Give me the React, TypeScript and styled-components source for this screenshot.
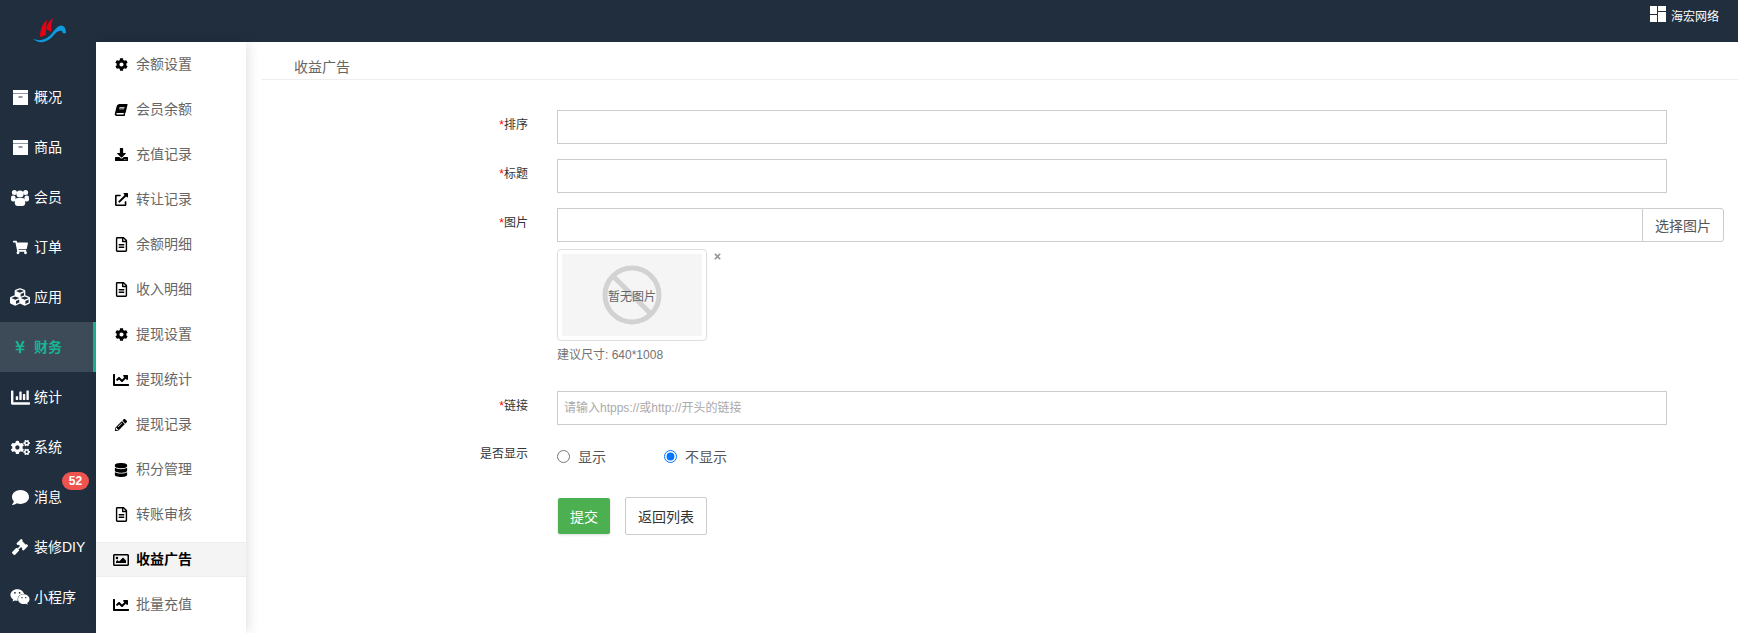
import React from "react";
import styled, { createGlobalStyle } from "styled-components";
import {
  FaBook,
  FaChartBar,
  FaChartLine,
  FaCog,
  FaCogs,
  FaComment,
  FaCubes,
  FaDatabase,
  FaDownload,
  FaExternalLinkAlt,
  FaGavel,
  FaPencilAlt,
  FaRegFileAlt,
  FaRegImage,
  FaShoppingCart,
  FaTimes,
  FaWeixin,
  FaYenSign,
} from "react-icons/fa";

const GlobalStyle = createGlobalStyle`
  html, body {
    margin: 0;
    padding: 0;
    height: 100%;
    background: #fff;
    overflow: hidden;
  }
  body, input, button {
    font-family: "Liberation Sans", "Noto Sans CJK SC", sans-serif;
  }
  * {
    box-sizing: border-box;
  }
`;

// FA4 style archive box, the package only has the FA5 one
const ArchiveIcon = () => (
  <svg width="15" height="15" viewBox="0 0 15 15">
    <rect x="0" y="0" width="15" height="3.500" fill="#fff" />
    <path d="M0 4h15v11H0z M5.500 6.500v1h4v-1z" fill="#fff" fillRule="evenodd" />
  </svg>
);

const UsersIcon = () => (
  <svg width="18" height="17" viewBox="0 0 18 17">
    <circle cx="9" cy="5" r="3.600" fill="#fff" />
    <circle cx="3.400" cy="3.400" r="2.500" fill="#fff" />
    <circle cx="14.600" cy="3.400" r="2.500" fill="#fff" />
    <rect x="3.800" y="9" width="10.400" height="8" rx="3" fill="#fff" />
    <rect x="0" y="6.500" width="4.500" height="6" rx="2" fill="#fff" />
    <rect x="13.500" y="6.500" width="4.500" height="6" rx="2" fill="#fff" />
  </svg>
);

const mainMenu = [
  { label: "概况", icon: <ArchiveIcon /> },
  { label: "商品", icon: <ArchiveIcon /> },
  { label: "会员", icon: <UsersIcon /> },
  { label: "订单", icon: <FaShoppingCart size={15} /> },
  { label: "应用", icon: <FaCubes size={20} /> },
  { label: "财务", icon: <FaYenSign size={14} />, active: true },
  { label: "统计", icon: <FaChartBar size={19} /> },
  { label: "系统", icon: <FaCogs size={19} /> },
  { label: "消息", icon: <FaComment size={17} />, badge: 52 },
  { label: "装修DIY", icon: <FaGavel size={16} /> },
  { label: "小程序", icon: <FaWeixin size={20} /> },
];

const subMenu = [
  { label: "余额设置", icon: <FaCog size={13} /> },
  { label: "会员余额", icon: <SkewedBook /> },
  { label: "充值记录", icon: <FaDownload size={13} /> },
  { label: "转让记录", icon: <FaExternalLinkAlt size={13} /> },
  { label: "余额明细", icon: <FaRegFileAlt size={15} /> },
  { label: "收入明细", icon: <FaRegFileAlt size={15} /> },
  { label: "提现设置", icon: <FaCog size={13} /> },
  { label: "提现统计", icon: <FaChartLine size={16} /> },
  { label: "提现记录", icon: <FaPencilAlt size={12} /> },
  { label: "积分管理", icon: <FaDatabase size={14} /> },
  { label: "转账审核", icon: <FaRegFileAlt size={15} /> },
  { label: "收益广告", icon: <FaRegImage size={16} />, active: true },
  { label: "批量充值", icon: <FaChartLine size={16} /> },
];

function SkewedBook() {
  return <FaBook size={12} style={{ transform: "skewX(-14deg)" }} />;
}

const Logo = () => (
  <svg width="36" height="28" viewBox="0 0 36 28">
    <path d="M9 22 C9 14 12 8 16 5 C15 10 15 17 15 20 Z" fill="#e60012" />
    <path d="M15 14 C16 9 19 5 22 3 C20 9 20 13 20 17 Z" fill="#e60012" />
    <path
      d="M2 24 C10 27 17 24 22 17 C25 13 29 9 32 11 C34 12 35 15 35 18 C33 19 31 18 31 16 C27 15 25 18 22 21 C16 28 8 29 2 24 Z"
      fill="#0f9ae0"
    />
  </svg>
);

const App = () => {
  return (
    <Shell>
      <GlobalStyle />
      <Sidebar>
        <LogoBox>
          <Logo />
        </LogoBox>
        {mainMenu.map((item) => (
          <MainItem key={item.label} $active={item.active}>
            <MainIcon>{item.icon}</MainIcon>
            <MainText>{item.label}</MainText>
            {item.badge && <Badge>{item.badge}</Badge>}
          </MainItem>
        ))}
      </Sidebar>
      <RightColumn>
        <TopBar>
          <CompanyIcon width="16" height="16" viewBox="0 0 16 16">
            <rect x="0" y="0" width="7" height="8" fill="#fff" />
            <rect x="8" y="0" width="8" height="5" fill="#fff" />
            <rect x="0" y="9" width="7" height="7" fill="#fff" />
            <rect x="8" y="6" width="8" height="10" fill="#fff" />
          </CompanyIcon>
          <CompanyName>海宏网络</CompanyName>
        </TopBar>
        <Body>
          <SubMenu>
            {subMenu.map((item) => (
              <SubItem key={item.label} $active={item.active}>
                <SubIcon>{item.icon}</SubIcon>
                <SubText>{item.label}</SubText>
              </SubItem>
            ))}
          </SubMenu>
          <Main>
            <PageHeader>收益广告</PageHeader>
            <Form>
              <Row>
                <Label>
                  <Star>*</Star>排序
                </Label>
                <TextInput />
              </Row>
              <Row>
                <Label>
                  <Star>*</Star>标题
                </Label>
                <TextInput />
              </Row>
              <ImageRow>
                <Label>
                  <Star>*</Star>图片
                </Label>
                <div>
                  <InputGroup>
                    <GroupInput />
                    <GroupButton>选择图片</GroupButton>
                  </InputGroup>
                  <Thumb>
                    <ThumbInner>
                      <NoImage width="64" height="64" viewBox="0 0 64 64">
                        <circle cx="32" cy="32" r="27" fill="none" stroke="#d2d2d2" strokeWidth="5" />
                        <line x1="13" y1="13" x2="51" y2="51" stroke="#d2d2d2" strokeWidth="5" />
                      </NoImage>
                      <NoImageText>暂无图片</NoImageText>
                    </ThumbInner>
                    <RemoveIcon>
                      <FaTimes />
                    </RemoveIcon>
                  </Thumb>
                  <Hint>建议尺寸: 640*1008</Hint>
                </div>
              </ImageRow>
              <Row>
                <Label>
                  <Star>*</Star>链接
                </Label>
                <TextInput placeholder="请输入htpps://或http://开头的链接" />
              </Row>
              <RadioRow>
                <Label>是否显示</Label>
                <RadioGroup>
                  <RadioLabel>
                    <input type="radio" name="show" />
                    显示
                  </RadioLabel>
                  <RadioLabel>
                    <input type="radio" name="show" defaultChecked />
                    不显示
                  </RadioLabel>
                </RadioGroup>
              </RadioRow>
              <ButtonRow>
                <SubmitButton>提交</SubmitButton>
                <BackButton>返回列表</BackButton>
              </ButtonRow>
            </Form>
          </Main>
        </Body>
      </RightColumn>
    </Shell>
  );
};

export default App;

const Shell = styled.div`
  display: flex;
  height: 633px;
  overflow: hidden;
`;
const Sidebar = styled.div`
  width: 96px;
  flex-shrink: 0;
  background: #202e3e;
`;
const LogoBox = styled.div`
  height: 72px;
  padding: 15px 0 0 31px;
  display: flex;
  align-items: flex-start;
`;
const MainItem = styled.div<{ $active?: boolean }>`
  position: relative;
  height: 50px;
  display: flex;
  align-items: center;
  font-size: 14px;
  color: ${({ $active }) => ($active ? "#1ab394" : "#fff")};
  font-weight: ${({ $active }) => ($active ? 700 : 400)};
  background: ${({ $active }) => ($active ? "#3d4a58" : "transparent")};
  border-right: ${({ $active }) => ($active ? "3px solid #1ab394" : "0")};
`;
const MainIcon = styled.span`
  width: 34px;
  padding-left: 6px;
  flex-shrink: 0;
  display: flex;
  justify-content: center;
`;
const MainText = styled.span`
  padding-bottom: 2px;
`;
const Badge = styled.span`
  position: absolute;
  top: 0;
  left: 62px;
  width: 27px;
  height: 18px;
  border-radius: 9px;
  background: #ef5350;
  color: #fff;
  font-size: 12px;
  font-weight: 700;
  line-height: 18px;
  text-align: center;
`;
const RightColumn = styled.div`
  flex: 1;
  min-width: 0;
  display: flex;
  flex-direction: column;
`;
const TopBar = styled.div`
  height: 42px;
  flex-shrink: 0;
  background: #202e3e;
  display: flex;
  align-items: flex-start;
  padding: 6px 19px 0 0;
  justify-content: flex-end;
`;
const CompanyIcon = styled.svg`
  margin-right: 5px;
`;
const CompanyName = styled.span`
  color: #fff;
  font-size: 12px;
  line-height: 22px;
`;
const Body = styled.div`
  flex: 1;
  display: flex;
  min-height: 0;
`;
const SubMenu = styled.div`
  width: 150px;
  flex-shrink: 0;
  padding-top: 5px;
  background: #fff;
  box-shadow: 2px 0 12px rgba(0, 0, 0, 0.12);
  position: relative;
  z-index: 1;
`;
const SubItem = styled.div<{ $active?: boolean }>`
  height: 35px;
  margin-bottom: 10px;
  display: flex;
  align-items: center;
  font-size: 14px;
  color: ${({ $active }) => ($active ? "#000" : "#666")};
  font-weight: ${({ $active }) => ($active ? 700 : 400)};
  background: ${({ $active }) => ($active ? "#f4f4f4" : "transparent")};
  border-top: ${({ $active }) => ($active ? "1px solid #eee" : "0")};
  border-bottom: ${({ $active }) => ($active ? "1px solid #eee" : "0")};
`;
const SubIcon = styled.span`
  width: 40px;
  padding-left: 10px;
  flex-shrink: 0;
  display: flex;
  justify-content: center;
  color: #000;
`;
const SubText = styled.span`
  padding-bottom: 3px;
`;
const Main = styled.div`
  flex: 1;
  min-width: 0;
  padding-left: 15px;
`;
const PageHeader = styled.div`
  height: 38px;
  padding: 16px 0 0 33px;
  line-height: 19px;
  font-size: 14px;
  color: #666;
  border-bottom: 1px solid #eee;
`;
const Form = styled.div`
  padding-top: 30px;
  display: flex;
  flex-direction: column;
  gap: 15px;
`;
const Row = styled.div`
  display: grid;
  grid-template-columns: 267px 1110px;
  column-gap: 29px;
  align-items: start;
`;
const ImageRow = styled(Row)`
  grid-template-columns: 267px 1167px;
  margin-bottom: 12px;
`;
const RadioRow = styled(Row)`
  margin-top: -1px;
  height: 34px;
`;
const ButtonRow = styled.div`
  margin: 9px 0 0 296px;
  display: flex;
  align-items: center;
  gap: 15px;
`;
const Label = styled.label`
  font-size: 12px;
  line-height: 18px;
  color: #333;
  text-align: right;
  padding-top: 6px;
`;
const Star = styled.span`
  color: #f00;
`;
const TextInput = styled.input`
  width: 100%;
  height: 34px;
  border: 1px solid #ccc;
  background: #fff;
  padding: 0 6px;
  font-size: 12px;
  outline: 0;
  &::placeholder {
    color: #aaa;
  }
`;
const InputGroup = styled.div`
  display: flex;
  height: 34px;
`;
const GroupInput = styled(TextInput)`
  flex: 1;
  width: auto;
  min-width: 0;
  border-right: 0;
`;
const GroupButton = styled.button`
  width: 82px;
  flex-shrink: 0;
  padding: 0;
  border: 1px solid #ccc;
  border-radius: 0 3px 3px 0;
  background: #fff;
  color: #555;
  font-size: 14px;
`;
const Thumb = styled.div`
  position: relative;
  margin-top: 7px;
  width: 150px;
  height: 92px;
  padding: 4px;
  border: 1px solid #ddd;
  border-radius: 4px;
`;
const ThumbInner = styled.div`
  position: relative;
  height: 100%;
  background: #f5f5f5;
  display: flex;
  align-items: center;
  justify-content: center;
`;
const NoImage = styled.svg`
  position: absolute;
  top: 9px;
  left: 38px;
`;
const NoImageText = styled.span`
  position: relative;
  font-size: 12px;
  color: #666;
`;
const RemoveIcon = styled.span`
  position: absolute;
  top: 2px;
  left: 155px;
  display: flex;
  font-size: 9px;
  color: #999;
`;
const Hint = styled.div`
  margin-top: 6px;
  font-size: 12px;
  line-height: 17px;
  color: #737373;
`;
const RadioGroup = styled.div`
  display: flex;
  height: 34px;
  align-items: center;
`;
const RadioLabel = styled.label`
  display: flex;
  align-items: center;
  width: 107px;
  font-size: 14px;
  color: #555;
  input {
    margin: 0 8px 0 0;
    width: 13px;
    height: 13px;
  }
`;
const SubmitButton = styled.button`
  width: 52px;
  height: 36px;
  margin-left: 1px;
  padding: 0;
  border: 0;
  border-radius: 2px;
  background: #4caf50;
  color: #fff;
  font-size: 14px;
  box-shadow: 0 1px 3px rgba(0, 0, 0, 0.15);
`;
const BackButton = styled.button`
  width: 82px;
  height: 38px;
  padding: 0;
  border: 1px solid #ccc;
  border-radius: 2px;
  background: #fff;
  color: #333;
  font-size: 14px;
`;
